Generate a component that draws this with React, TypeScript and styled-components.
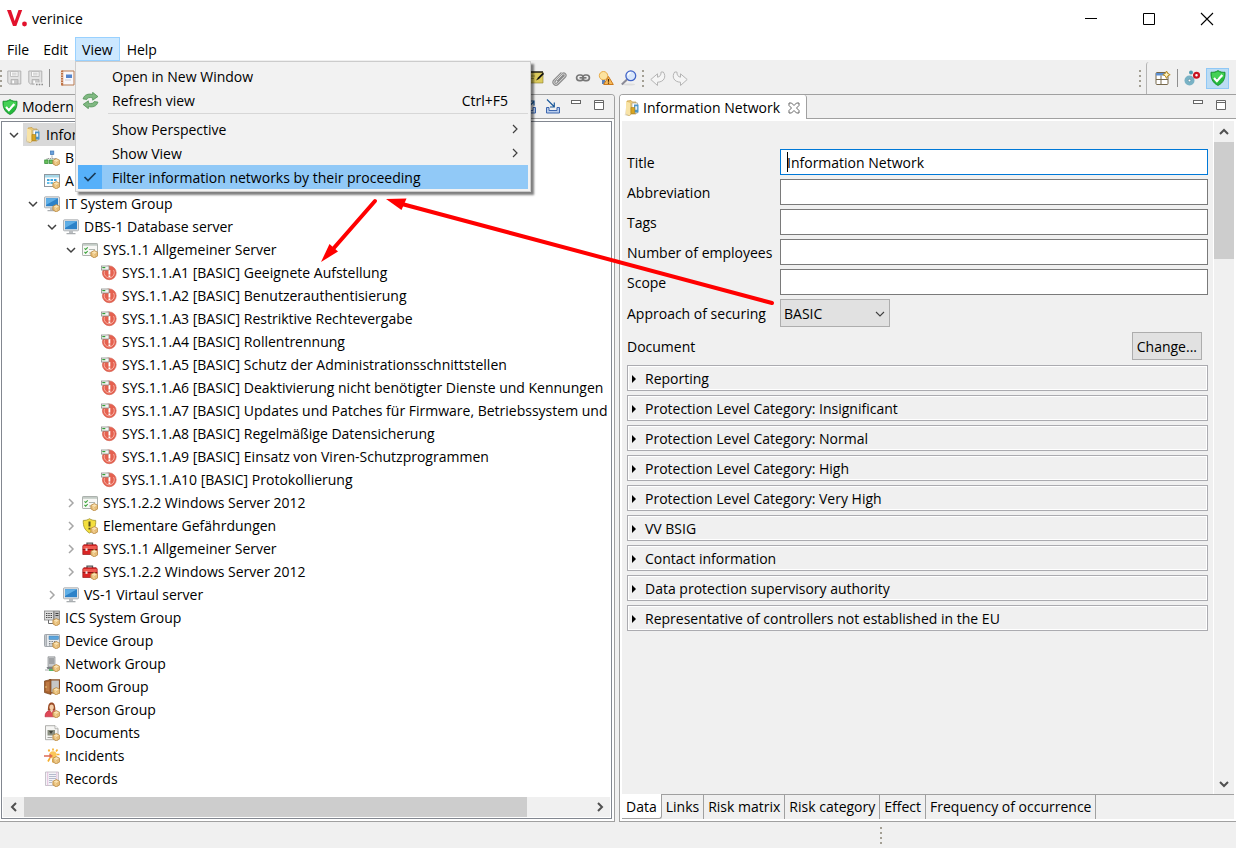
import React from 'react';
import styled, { createGlobalStyle } from 'styled-components';

const GlobalStyle = createGlobalStyle`
  *, *::before, *::after { box-sizing: border-box; }
  html, body { margin: 0; padding: 0; }
  body, button, input, select {
    font-family: "Open Sans", "Noto Sans", sans-serif;
    font-size: 14px;
    line-height: 20px;
    color: #000;
  }
  button { margin: 0; padding: 0; border: 0; background: none; }
  svg { display: block; flex: none; }
`;

/* ---------- window frame ---------- */

const Window = styled.div`
  position: relative;
  display: flex;
  flex-direction: column;
  min-height: 100vh;
  overflow: hidden;
  background: #f0f0f0;
`;

const TitleBar = styled.header`
  display: flex;
  align-items: center;
  height: 37px;
  padding-left: 7px;
  gap: 5px;
  background: #fff;
`;

const WindowButtons = styled.div`
  display: flex;
  margin-left: auto;
`;

const WindowButton = styled.button`
  display: flex;
  align-items: center;
  justify-content: center;
  width: 58px;
  height: 36px;
`;

const MenuBar = styled.nav`
  display: flex;
  height: 23px;
  background: #fff;
`;

const MenuSlot = styled.div`
  position: relative;
  z-index: 5;
`;

const MenuTitle = styled.button<{ $open?: boolean }>`
  height: 24px;
  padding: 2px 6px 0;
  border: 1px solid ${(p) => (p.$open ? '#99d1ff' : 'transparent')};
  background: ${(p) => (p.$open ? '#cce8ff' : 'transparent')};
`;

const Dropdown = styled.div`
  position: absolute;
  left: 0;
  top: 24px;
  width: 456px;
  padding: 2px;
  border: 1px solid #ccc;
  background: #f2f2f2;
  box-shadow: 3px 3px 2px rgba(0, 0, 0, 0.5);
`;

const MenuItem = styled.button<{ $active?: boolean }>`
  display: grid;
  grid-template-columns: 24px 1fr auto;
  column-gap: 10px;
  align-items: end;
  width: 100%;
  height: 24px;
  padding-right: 8px;
  line-height: 22px;
  text-align: left;
  background: ${(p) => (p.$active ? '#91c9f7' : 'transparent')};
  & > svg { align-self: center; }
`;

const MenuMark = styled.span<{ $active?: boolean }>`
  display: flex;
  align-items: center;
  justify-content: center;
  height: 24px;
  background: ${(p) => (p.$active ? '#56b0fa' : 'transparent')};
`;

const Shortcut = styled.span`
  padding-right: 12px;
`;

const MenuSeparator = styled.div`
  height: 5px;
  margin: 1px 0 -1px 30px;
  border-top: 1px solid #d7d7d7;
`;

/* ---------- toolbar ---------- */

const Toolbar = styled.div`
  display: flex;
  align-items: center;
  height: 34px;
  padding: 2px 7px 0 0;
`;

const ToolGroup = styled.div<{ $width?: number; $gap: number; $indent?: number }>`
  display: flex;
  align-items: center;
  gap: ${(p) => p.$gap}px;
  padding-left: ${(p) => p.$indent ?? 0}px;
  ${(p) => (p.$width ? `flex: 0 0 ${p.$width}px;` : '')}
`;

const ToolSpace = styled.div`
  flex: 1;
`;

const ToolButton = styled.button<{ $active?: boolean }>`
  display: flex;
  align-items: center;
  justify-content: center;
  width: ${(p) => (p.$active ? 23 : 16)}px;
  height: 21px;
  background: ${(p) => (p.$active ? '#bcdcf4' : 'transparent')};
  outline: ${(p) => (p.$active ? '1px solid #90c8f6' : 'none')};
  outline-offset: -1px;
`;

const ToolDivider = styled.span`
  width: 1px;
  height: 18px;
  background: #8f8f8f;
`;

const Grip = styled.span`
  display: flex;
  flex-direction: column;
  justify-content: space-between;
  width: 2px;
  height: 17px;
  & > i {
    width: 2px;
    height: 2px;
    background: #a39f94;
  }
`;

const PerspectiveBar = styled.div`
  display: flex;
  align-items: center;
  gap: 6px;
  height: 32px;
  margin-left: 5px;
  padding-left: 8px;
  border-left: 1px solid #b4b4b4;
  border-top-left-radius: 3px;
`;

/* ---------- views ---------- */

const Workbench = styled.main`
  display: flex;
  flex: 1;
  gap: 4px;
  min-height: 0;
`;

const View = styled.section<{ $grow: number; $side: 'left' | 'right' }>`
  display: flex;
  flex-direction: column;
  flex: ${(p) => p.$grow} 1 0;
  min-width: 0;
  border: 1px solid #a0a0a0;
  border-width: ${(p) => (p.$side === 'left' ? '1px 1px 1px 0' : '1px 0 1px 1px')};
  border-radius: ${(p) => (p.$side === 'left' ? '0 4px 0 0' : '4px 0 0 0')};
  background: #fff;
  overflow: hidden;
`;

const ViewHeader = styled.div`
  display: flex;
  height: 24px;
  background: #f0f0f0;
`;

const HeaderFill = styled.div`
  display: flex;
  flex: 1;
  align-items: center;
  gap: 4px;
  padding: 1px 9px 0 2px;
  border-bottom: 1px solid #a0a0a0;
`;

const HeaderTools = styled.div`
  display: flex;
  align-items: flex-start;
  gap: 8px;
  height: 17px;
  margin-left: auto;
`;

const EditorTab = styled.div`
  display: flex;
  align-items: center;
  gap: 3px;
  padding: 1px 6px 0 4px;
  border-right: 1px solid #a0a0a0;
  border-top-right-radius: 3px;
  background: #fff;
`;

const CloseTab = styled.button`
  margin-left: 5px;
`;

/* ---------- tree ---------- */

const TreeFrame = styled.div`
  display: flex;
  flex: 1;
  flex-direction: column;
  margin: 2px 2px 2px 1px;
  border: 1px solid #828790;
`;

const Tree = styled.ul`
  flex: 1;
  margin: 0;
  padding: 1px 0 0;
  list-style: none;
  overflow: hidden;
`;

const TreeRow = styled.li<{ $level: number }>`
  display: flex;
  height: 23px;
  padding-left: ${(p) => 2 + p.$level * 19}px;
  white-space: nowrap;
`;

const Twisty = styled.span`
  display: flex;
  align-items: center;
  justify-content: center;
  flex: 0 0 19px;
`;

const NodeLabel = styled.span<{ $selected?: boolean }>`
  display: flex;
  align-items: center;
  gap: 5px;
  padding: 0 4px 0 2px;
  background: ${(p) => (p.$selected ? '#d9d9d9' : 'transparent')};
`;

/* ---------- scroll bars ---------- */

const ScrollBar = styled.div<{ $vertical?: boolean }>`
  display: flex;
  flex-direction: ${(p) => (p.$vertical ? 'column' : 'row')};
  ${(p) => (p.$vertical ? 'flex: 0 0 21px; border-left: 1px solid #fff;' : 'height: 20px; margin: 0 1px 1px;')}
  background: #f0f0f0;
`;

const ScrollArrow = styled.button`
  display: flex;
  align-items: center;
  justify-content: center;
  flex: 0 0 21px;
`;

const ScrollThumb = styled.span<{ $share: number }>`
  flex: ${(p) => p.$share} 1 0;
  background: #cdcdcd;
`;

const ScrollRest = styled.span<{ $share: number }>`
  flex: ${(p) => p.$share} 1 0;
`;

/* ---------- form ---------- */

const EditorBody = styled.div`
  display: flex;
  flex: 1;
  margin: 2px 2px 0;
  background: #f0f0f0;
`;

const Form = styled.form`
  flex: 1;
  min-width: 0;
  padding: 28px 5px 0;
`;

const Field = styled.div`
  position: relative;
  display: grid;
  grid-template-columns: 153px 1fr;
  align-items: center;
  margin-bottom: 4px;
  white-space: nowrap;
  & > label { padding-top: 2px; }
`;

const TextBox = styled.input<{ $focused?: boolean }>`
  width: 100%;
  height: 26px;
  padding: 0 6px;
  border: 1px solid ${(p) => (p.$focused ? '#0078d7' : '#7a7a7a')};
  border-radius: 0;
  background: #fff;
  outline: none;
`;

const Caret = styled.span`
  position: absolute;
  left: 160px;
  top: 3px;
  width: 1px;
  height: 20px;
  background: #000;
`;

const ComboWrap = styled.div`
  position: relative;
  width: 110px;
  & > svg {
    position: absolute;
    right: 5px;
    top: 10px;
    pointer-events: none;
  }
`;

const Combo = styled.select`
  appearance: none;
  width: 100%;
  height: 28px;
  padding: 2px 3px 0;
  border: 1px solid #adadad;
  border-radius: 0;
  background: #e1e1e1;
`;

const DocumentRow = styled.div`
  display: flex;
  align-items: center;
  justify-content: space-between;
  margin: 5px 6px 5px 0;
  & > span { padding-top: 2px; }
`;

const PushButton = styled.button`
  height: 28px;
  padding: 2px 4px 0;
  border: 1px solid #adadad;
  background: #e1e1e1;
`;

const Sections = styled.div`
  display: flex;
  flex-direction: column;
  gap: 4px;
`;

const SectionButton = styled.button`
  display: flex;
  align-items: center;
  gap: 9px;
  width: 100%;
  height: 26px;
  padding: 2px 4px 0;
  border: 1px solid #ababb0;
  box-shadow: inset 0 0 0 1px #fff;
`;

const PageTabs = styled.div`
  display: flex;
  height: 25px;
  margin: 0 2px 2px;
  background: #f0f0f0;
  white-space: nowrap;
`;

const PageTab = styled.button<{ $active?: boolean }>`
  padding: ${(p) => (p.$active ? 2 : 0)}px 4px 0;
  border: solid #a0a0a0;
  border-width: ${(p) => (p.$active ? '0 1px 1px 0' : '1px 1px 0 0')};
  border-bottom-right-radius: ${(p) => (p.$active ? 3 : 0)}px;
  background: ${(p) => (p.$active ? '#fff' : '#f0f0f0')};
`;

const PageTabFill = styled.div`
  flex: 1;
  border-top: 1px solid #a0a0a0;
`;

const StatusBar = styled.footer`
  display: grid;
  grid-template-columns: 880fr 356fr;
  align-items: center;
  height: 26px;
`;

const StatusGrip = styled.div`
  grid-column: 2;
`;

const Arrows = styled.svg`
  position: absolute;
  left: 310px;
  top: 190px;
  z-index: 6;
  pointer-events: none;
`;

/* ---------- icons ---------- */

const Icon = ({ children, size = 16 }: { children: React.ReactNode; size?: number }) => (
  <svg width={size} height={size} viewBox="0 0 16 16" aria-hidden="true">
    {children}
  </svg>
);

const Cube = () => (
  <g>
    <path d="M12.3 8.6l3.4 1.7v3.6l-3.4 2-3.4-2v-3.6z" fill="#e6bd78" stroke="#b98a45" strokeWidth=".8" />
    <path d="M12.3 9.2l2.6 1.3-2.6 1.4-2.6-1.4z" fill="#fae3b4" />
    <path d="M10.4 11.8l1.6 1v2" stroke="#f7dca5" strokeWidth=".8" fill="none" />
  </g>
);

const Shield = () => (
  <Icon>
    <path d="M8 .5c2 1.500 4.500 2 7 1.700.4 6-1.500 10.600-7 13.300C2.500 12.800.6 8.200 1 2.200 3.500 2.500 6 2 8 .5z" fill="#25b93c" stroke="#168a2b" strokeWidth=".8" />
    <path d="M8 1.500c1.800 1.200 4 1.700 6.200 1.600 0 1.800-.2 3.200-.6 4.500-4 .2-7.600.6-11.200 1.400C1.900 7.200 1.700 5.300 1.800 3.100 4 3.200 6.200 2.700 8 1.500z" fill="#54dd62" opacity=".65" />
    <path d="M4 8l2.900 3.200L12.300 5" fill="none" stroke="#fff" strokeWidth="2.200" />
  </Icon>
);

const Folder = () => (
  <Icon>
    <path d="M3 1l4-.5 1.500 1.500H12v12H7l-1.500 1.800L2 14.500z" fill="#e9c874" stroke="#c49a45" strokeWidth=".7" />
    <path d="M2 1.300L6 3v12.400l-4-1.500z" fill="#f8e3a6" />
    <path d="M8 3h5.500v10H8z" fill="#fff" stroke="#a8a48f" strokeWidth=".7" />
    <path d="M10 4.500h4.500v8H10z" fill="#4c94c8" />
    <path d="M11.200 6.200h2v3.500h-2z" fill="#e8f3fa" />
    <path d="M7 7.500h3.700v6H7z" fill="#d9a520" stroke="#ad8117" strokeWidth=".6" />
    <path d="M0 15l3-1 2 1.800z" fill="#d8cfb4" />
  </Icon>
);

const Processes = () => (
  <Icon>
    <path d="M8 4v4M3 10V8.500h9V10" fill="none" stroke="#9a9a9a" strokeDasharray="1.500 .7" />
    <rect x="6.400" y="1" width="3.400" height="3.400" fill="#6aa0dc" stroke="#3f77b5" strokeWidth=".7" />
    <rect x=".7" y="10" width="3.400" height="3.400" fill="#69c05c" stroke="#36903a" strokeWidth=".8" />
    <rect x="5.500" y="10" width="3.400" height="3.400" fill="#69c05c" stroke="#36903a" strokeWidth=".8" />
    <Cube />
  </Icon>
);

const Applications = () => (
  <Icon>
    <rect x=".5" y="1.500" width="15" height="12" fill="#fdfdfd" stroke="#8e979e" />
    <path d="M1 2h14v2.500H1z" fill="#a6d7e8" />
    <path d="M3 6h2.500v2H3zM6.500 6H9v2H6.500zM10 6h2.500v2H10z" fill="#3ea5de" />
    <path d="M3 9h2.500v2H3zM6.500 9H9v2H6.500z" fill="#63bde8" />
    <Cube />
  </Icon>
);

const Monitor = ({ cube }: { cube?: boolean }) => (
  <Icon>
    <rect x=".5" y=".8" width="15" height="11" rx=".8" fill="#e2e4e6" stroke="#9ea3a7" strokeWidth=".8" />
    <rect x="2" y="2.200" width="12" height="8" fill="#2d82c8" />
    <path d="M2 2.200h12L2 9z" fill="#5eaee6" />
    <path d="M6 12h4v2H6z" fill="#b9bdc0" />
    <path d="M3.500 14h9v1.300h-9z" fill="#a9adb0" />
    {cube && <Cube />}
  </Icon>
);

const Checklist = () => (
  <Icon>
    <rect x=".5" y="1.500" width="15" height="12" rx=".6" fill="#f8f8f6" stroke="#a3a8a4" strokeWidth=".9" />
    <path d="M1 2h14v1.800H1z" fill="#c3ccc6" />
    <path d="M2.500 6.300l1.200 1.200 2-2.200M2.500 10l1.200 1.200 2-2.200" fill="none" stroke="#37a237" strokeWidth="1.100" />
    <path d="M7 7.500h6M7 11h2" stroke="#b0b6b0" />
    <Cube />
  </Icon>
);

const Requirement = () => (
  <Icon>
    <circle cx="8.300" cy="7.800" r="6.900" fill="#e5614f" stroke="#d2594a" strokeWidth=".6" />
    <path d="M12.500 5.200a5 5 0 1 1-9 1" fill="none" stroke="#f7b4a8" strokeWidth="1" />
    <rect x="7.500" y="5" width="1.800" height="4.600" fill="#fff" />
    <rect x="7.500" y="10.400" width="1.800" height="1.700" fill="#fff" />
    <rect x=".4" y="1" width="7.600" height="4" fill="#f4f4f2" stroke="#8c918c" strokeWidth=".8" />
    <path d="M1.300 2.600h3" stroke="#33a03a" strokeWidth="1.200" />
  </Icon>
);

const Threat = () => (
  <Icon>
    <path d="M7.500.7C9.300 2 11.300 2.500 13.700 2.400c.3 5.600-1.300 9.800-6.200 12.600C2.600 12.200 1 8 1.300 2.400 3.700 2.500 5.700 2 7.500.7z" fill="#f4df3e" stroke="#a89b33" strokeWidth=".9" />
    <path d="M6.500 3.500h2v5h-2zM6.500 9.700h2v1.800h-2z" fill="#57501d" />
    <Cube />
  </Icon>
);

const Toolbox = () => (
  <Icon>
    <path d="M5 5V2.200h5.500V5" fill="none" stroke="#555" strokeWidth="1.300" />
    <path d="M.8 5l1-1.300h12.400l1 1.300v8.500H.8z" fill="#d92525" stroke="#9a1717" strokeWidth=".7" />
    <path d="M1.300 5h13.400v3H1.300z" fill="#f05a50" />
    <path d="M.8 8.500h14.400" stroke="#7d1010" strokeWidth=".8" />
    <rect x="3.500" y="7.300" width="2" height="2.600" fill="#e9e9e9" />
    <Cube />
  </Icon>
);

const Ics = () => (
  <Icon>
    <rect x=".5" y="1" width="9" height="9" fill="#dedede" stroke="#858585" strokeWidth=".8" />
    <rect x="10" y="1" width="5.500" height="9" fill="#bfbfbf" stroke="#7c7c7c" strokeWidth=".8" />
    <path d="M2 3.500h6M2 5.500h6M2 7.500h6" stroke="#444" strokeDasharray="1.400 .9" />
    <path d="M11.500 3.500h3M11.500 5.500h3" stroke="#444" />
    <path d="M4.500 10v3.500H9" fill="none" stroke="#6c6c6c" />
    <Cube />
  </Icon>
);

const Device = () => (
  <Icon>
    <rect x=".5" y="1.500" width="15" height="12" rx=".8" fill="#e6e9ec" stroke="#8c9298" strokeWidth=".8" />
    <path d="M2.200 2v11" stroke="#a7acb1" strokeWidth="1.500" />
    <rect x="5" y="3" width="9.500" height="3.500" fill="#5ba4dc" stroke="#3d7cad" strokeWidth=".5" />
    <path d="M5 8.500h8M5 10.500h4M5 12h4" stroke="#7d8389" strokeDasharray="1.500 1" />
    <Cube />
  </Icon>
);

const Network = () => (
  <Icon>
    <path d="M4 .8h7v10H4z" fill="#c6c9cb" stroke="#8b8e90" strokeWidth=".7" />
    <path d="M5 3h5M5 5h5M5 7h5" stroke="#7a7d80" />
    <path d="M2.500 11h9.500l-1 2H3.500z" fill="#7a8084" />
    <path d="M1 14h4" stroke="#a5a8aa" strokeWidth="1" />
    <path d="M5 14h5" stroke="#2da445" strokeWidth="1.600" />
    <Cube />
  </Icon>
);

const Room = () => (
  <Icon>
    <path d="M5.500.8h10v13h-10z" fill="#c6c6c6" stroke="#8b4f24" strokeWidth="1.200" />
    <path d="M.5 2L7 .5v15L.5 13.500z" fill="#a7622f" stroke="#74401a" strokeWidth=".7" />
    <path d="M2 3.300l3.400-.6v9.900L2 12z" fill="#bd7a45" />
    <circle cx="2" cy="8" r=".8" fill="#f2d27d" />
    <Cube />
  </Icon>
);

const Person = () => (
  <Icon>
    <path d="M3.800 8.500C4 2.500 5 .5 7.600.5s3.600 2 3.800 8z" fill="#9a4b26" />
    <ellipse cx="7.600" cy="5.200" rx="2.100" ry="2.800" fill="#f5cfaa" />
    <path d="M1 14.800c0-4 2-5.800 4.800-6.200l1.800 2 1.800-2c2.800.4 4.600 2.200 4.600 6.200z" fill="#e04858" stroke="#b52e3d" strokeWidth=".6" />
    <path d="M6.300 8.200h2.600l-1.300 2.600z" fill="#f8dfc4" />
    <Cube />
  </Icon>
);

const DocumentIcon = () => (
  <Icon>
    <path d="M1.500.7h9.500l3 3v11h-12.500z" fill="#f5f5f3" stroke="#9c9c98" strokeWidth=".8" />
    <path d="M11 .7v3h3" fill="#fff" stroke="#9c9c98" strokeWidth=".7" />
    <path d="M3.500 5h7.500v5.500H3.500z" fill="#8a8f80" />
    <path d="M5 6h4l-2 3z" fill="#40423a" />
    <path d="M3.500 12.500h5" stroke="#a3a39f" />
    <Cube />
  </Icon>
);

const Incident = () => (
  <Icon>
    <path d="M9 2.500V.5M12 3.500l1.500-2M5.500 3.500L4.500 1.500M12.500 6.500h3M6 10l-2 3.500M9 11v3.500" stroke="#f6b02e" strokeWidth="1.700" />
    <circle cx="9" cy="6.800" r="3.600" fill="#fbc658" />
    <path d="M0 7.300h5.500V5.600L9 8l-3.500 2.400V8.800H0z" fill="#dd6a55" />
    <Cube />
  </Icon>
);

const RecordIcon = () => (
  <Icon>
    <path d="M1.500 1h13v13.500h-13z" fill="#f4f3f7" stroke="#b2aeb7" strokeWidth=".7" />
    <path d="M3.700 1v13.500M12.800 1v13.500" stroke="#e0b2d4" strokeWidth=".8" />
    <path d="M5 3.500h7M5 5.500h7M5 7.500h7M5 9.500h3.500M5 11.500h3" stroke="#adb3c6" strokeWidth=".9" />
    <Cube />
  </Icon>
);

const Save = ({ all }: { all?: boolean }) => (
  <Icon>
    <path d="M.8 1h13v13H2.500L.8 12.500z" fill="#e3e3e3" stroke="#b1b1b1" />
    <path d="M3.500 1.500h7.600v5H3.500z" fill="#fafafa" stroke="#b5b5b5" strokeWidth=".8" />
    <path d="M5 3.200h4.600M5 4.900h4.600" stroke="#bdbdbd" strokeWidth=".8" />
    <path d="M4 9.500h7V14H4z" fill="#c9c9c9" stroke="#aaa" strokeWidth=".7" />
    <path d="M5.300 10.500h1.700v2.700H5.300z" fill="#fff" />
    {all && <path d="M6.500 12.500H16V16H6.500z" fill="#f0f0f0" />}
    {all && <path d="M8 14.500h7" stroke="#8d8d8d" strokeWidth="1.600" strokeDasharray="1.600 1.100" />}
  </Icon>
);

const Notebook = () => (
  <Icon>
    <path d="M2 1h12v14H2z" fill="#f8f7fb" stroke="#b97b50" />
    <path d="M1 .5h2.200v15H1z" fill="#bf7246" />
    <path d="M0 2.500h3M0 5h3M0 7.500h3M0 10h3M0 12.500h3" stroke="#f0ddd0" strokeWidth=".8" />
    <path d="M6 4.500h6v3.500H6z" fill="#5384cc" />
    <path d="M5 10h6" stroke="#c4c4cc" strokeWidth=".8" />
  </Icon>
);

const Note = () => (
  <Icon>
    <path d="M0 2h14v11H0z" fill="#dccb5d" stroke="#8f8230" strokeWidth=".6" />
    <path d="M0 2h14" stroke="#111" strokeWidth="1.300" />
    <path d="M14 2.500l-5 5-2 3 3-1.500 5-5z" fill="#111" />
    <path d="M2 6h4M2 8.500h3" stroke="#8c7f2c" strokeWidth=".8" />
  </Icon>
);

const Clip = () => (
  <Icon>
    <path d="M4.500 10.500l6-6c1.600-1.500 3.600.5 2.100 2.100l-7 7c-2.200 2.100-5.100-.8-3-3l7.500-7.500" fill="none" stroke="#8d8d8d" strokeWidth="3" />
    <path d="M4.500 10.500l6-6c1.600-1.500 3.600.5 2.100 2.100l-7 7c-2.200 2.100-5.100-.8-3-3l7.500-7.500" fill="none" stroke="#dcdcdc" strokeWidth="1" />
  </Icon>
);

const Chain = () => (
  <Icon>
    <rect x="1.600" y="5" width="6.800" height="5.600" rx="2.800" fill="none" stroke="#777" strokeWidth="1.700" />
    <rect x="7.600" y="5" width="6.800" height="5.600" rx="2.800" fill="none" stroke="#777" strokeWidth="1.700" />
    <path d="M4.500 7.800h7" stroke="#777" strokeWidth="1.700" />
  </Icon>
);

const BulbWarning = () => (
  <Icon>
    <circle cx="5.500" cy="5.700" r="4.200" fill="#fce3a0" stroke="#e5a53b" strokeWidth=".9" />
    <path d="M4 10h3v4H4z" fill="#6084b8" />
    <path d="M10.500 6.500l4.800 8H5.700z" fill="#f6ba5a" stroke="#cc7a1d" strokeWidth="1" />
    <path d="M10.500 9v2.800M10.500 12.600v1.200" stroke="#4c2b08" strokeWidth="1.200" />
  </Icon>
);

const Search = () => (
  <Icon>
    <ellipse cx="8" cy="14.500" rx="6" ry="1" fill="#ddd" />
    <path d="M.8 14.500L6 9.500" stroke="#8a8a96" strokeWidth="2" />
    <circle cx="9.800" cy="5.800" r="4.900" fill="#d9e7fb" stroke="#4164c8" strokeWidth="1.300" />
    <path d="M6.900 5.500a3 3 0 0 1 3-2.800" fill="none" stroke="#fff" strokeWidth="1.200" />
  </Icon>
);

const Back = ({ forward }: { forward?: boolean }) => (
  <Icon>
    <path
      d="M.8 9.500L7.500 3.800v3.400c2.300-.4 3.700-2 3.600-5.200h2.200c3.200 4.500 1 10-5.800 10.200v3.300z"
      transform={forward ? 'translate(16 0) scale(-1 1)' : undefined}
      fill="#f5f5f5"
      stroke="#b4b4b4"
    />
  </Icon>
);

const OpenPerspective = () => (
  <Icon>
    <rect x="1" y="2.500" width="12" height="12" rx="1" fill="#fff" stroke="#77684b" />
    <path d="M1 3h12v2.500H1z" fill="#5a8ed2" />
    <path d="M1 9.500h12M6 5.500v9" stroke="#77684b" />
    <path d="M11.500 1l1.200 2.500 2.500 1.200-2.500 1.200-1.200 2.500-1.200-2.500-2.500-1.200 2.500-1.200z" fill="#fff3bf" stroke="#b98d24" strokeWidth="1" />
  </Icon>
);

const Risk = () => (
  <Icon>
    <circle cx="5.500" cy="10.500" r="5" fill="#79b2c5" />
    <circle cx="5.500" cy="10.500" r="1.300" fill="#fff" stroke="#4c8498" strokeWidth=".6" />
    <circle cx="7" cy="2.500" r="2" fill="#4c9bb1" />
    <circle cx="12.500" cy="5.200" r="2.400" fill="#fff" stroke="#c81420" strokeWidth="2.300" />
  </Icon>
);

const Transfer = ({ into }: { into?: boolean }) => (
  <Icon>
    <path d="M1.500 8.500v5.500h13V8.500h-2.500v3H4v-3z" fill="#b9cdec" stroke="#3c66ae" />
    {into ? (
      <path d="M2 .5l7 7M9.300 3.500V8H5" fill="none" stroke="#1d5a9b" strokeWidth="1.200" />
    ) : (
      <path d="M6 9.500l7-7M8.500 2H13v4.500" fill="none" stroke="#1d5a9b" strokeWidth="1.200" />
    )}
  </Icon>
);

const Refresh = () => (
  <Icon size={17}>
    <path d="M1 6.500C2 2.500 6 1.300 10 2.300V.3l5 4-5 3.400V5.500C7 4.800 5.300 5.200 4.500 7z" fill="#80b982" stroke="#4b8d51" strokeWidth=".7" />
    <path d="M15 9.500c-1 4-5 5.200-9 4.200v2l-5-4 5-3.400v2.200c3 .7 4.700.3 5.500-1.500z" fill="#80b982" stroke="#4b8d51" strokeWidth=".7" />
  </Icon>
);

const Minimize = () => (
  <svg width="16" height="12" viewBox="0 0 16 12" aria-hidden="true">
    <rect x="2.500" y="1.500" width="9" height="3" fill="#fff" stroke="#666" />
  </svg>
);

const Maximize = () => (
  <svg width="12" height="12" viewBox="0 0 12 12" aria-hidden="true">
    <path d="M1.500 1.500h9v9h-9zM1.500 3.500h9" fill="#fff" stroke="#666" />
  </svg>
);

type Direction = 'up' | 'down' | 'left' | 'right';
const angles: Record<Direction, number> = { down: 0, left: 90, up: 180, right: 270 };

const Chevron = ({ to, color = '#404040', weight = 1.5 }: { to: Direction; color?: string; weight?: number }) => (
  <svg width="10" height="10" viewBox="0 0 10 10" aria-hidden="true">
    <path d="M1 3l4 4 4-4" transform={`rotate(${angles[to]} 5 5)`} fill="none" stroke={color} strokeWidth={weight} />
  </svg>
);

/* ---------- data ---------- */

type Node = {
  level: number;
  icon: React.ReactNode;
  text: string;
  state?: 'open' | 'closed';
  selected?: boolean;
};

const requirements = [
  'A1 [BASIC] Geeignete Aufstellung',
  'A2 [BASIC] Benutzerauthentisierung',
  'A3 [BASIC] Restriktive Rechtevergabe',
  'A4 [BASIC] Rollentrennung',
  'A5 [BASIC] Schutz der Administrationsschnittstellen',
  'A6 [BASIC] Deaktivierung nicht benötigter Dienste und Kennungen',
  'A7 [BASIC] Updates und Patches für Firmware, Betriebssystem und',
  'A8 [BASIC] Regelmäßige Datensicherung',
  'A9 [BASIC] Einsatz von Viren-Schutzprogrammen',
  'A10 [BASIC] Protokollierung',
];

const nodes: Node[] = [
  { level: 0, icon: <Folder />, text: 'Infor', state: 'open', selected: true },
  { level: 1, icon: <Processes />, text: 'B' },
  { level: 1, icon: <Applications />, text: 'A' },
  { level: 1, icon: <Monitor cube />, text: 'IT System Group', state: 'open' },
  { level: 2, icon: <Monitor />, text: 'DBS-1 Database server', state: 'open' },
  { level: 3, icon: <Checklist />, text: 'SYS.1.1 Allgemeiner Server', state: 'open' },
  ...requirements.map((name) => ({ level: 4, icon: <Requirement />, text: `SYS.1.1.${name}` })),
  { level: 3, icon: <Checklist />, text: 'SYS.1.2.2 Windows Server 2012', state: 'closed' },
  { level: 3, icon: <Threat />, text: 'Elementare Gefährdungen', state: 'closed' },
  { level: 3, icon: <Toolbox />, text: 'SYS.1.1 Allgemeiner Server', state: 'closed' },
  { level: 3, icon: <Toolbox />, text: 'SYS.1.2.2 Windows Server 2012', state: 'closed' },
  { level: 2, icon: <Monitor />, text: 'VS-1 Virtaul server', state: 'closed' },
  { level: 1, icon: <Ics />, text: 'ICS System Group' },
  { level: 1, icon: <Device />, text: 'Device Group' },
  { level: 1, icon: <Network />, text: 'Network Group' },
  { level: 1, icon: <Room />, text: 'Room Group' },
  { level: 1, icon: <Person />, text: 'Person Group' },
  { level: 1, icon: <DocumentIcon />, text: 'Documents' },
  { level: 1, icon: <Incident />, text: 'Incidents' },
  { level: 1, icon: <RecordIcon />, text: 'Records' },
];

const fields = [
  { id: 'title', label: 'Title', value: 'Information Network' },
  { id: 'abbreviation', label: 'Abbreviation', value: '' },
  { id: 'tags', label: 'Tags', value: '' },
  { id: 'employees', label: 'Number of employees', value: '' },
  { id: 'scope', label: 'Scope', value: '' },
];

const sections = [
  'Reporting',
  'Protection Level Category: Insignificant',
  'Protection Level Category: Normal',
  'Protection Level Category: High',
  'Protection Level Category: Very High',
  'VV BSIG',
  'Contact information',
  'Data protection supervisory authority',
  'Representative of controllers not established in the EU',
];

const pages = ['Data', 'Links', 'Risk matrix', 'Risk category', 'Effect', 'Frequency of occurrence'];

const Dots = () => (
  <Grip aria-hidden="true">
    <i />
    <i />
    <i />
    <i />
  </Grip>
);

const ViewMenu = () => (
  <Dropdown role="menu">
    <MenuItem role="menuitem">
      <MenuMark />
      Open in New Window
    </MenuItem>
    <MenuItem role="menuitem">
      <MenuMark>
        <Refresh />
      </MenuMark>
      Refresh view
      <Shortcut>Ctrl+F5</Shortcut>
    </MenuItem>
    <MenuSeparator />
    <MenuItem role="menuitem">
      <MenuMark />
      Show Perspective
      <Chevron to="right" weight={1.2} />
    </MenuItem>
    <MenuItem role="menuitem">
      <MenuMark />
      Show View
      <Chevron to="right" weight={1.2} />
    </MenuItem>
    <MenuItem role="menuitemcheckbox" aria-checked="true" $active>
      <MenuMark $active>
        <svg width="14" height="12" viewBox="0 0 14 12" aria-hidden="true">
          <path d="M1.500 6l3.500 3.500L12.500 2" fill="none" stroke="#1b3a57" strokeWidth="1.700" />
        </svg>
      </MenuMark>
      Filter information networks by their proceeding
    </MenuItem>
  </Dropdown>
);

export default function App() {
  return (
    <Window>
      <GlobalStyle />
      <TitleBar>
        <svg width="20" height="20" viewBox="0 0 20 20" aria-hidden="true">
          <path d="M0 1h4l3.700 11L11.500 1h3.700L9.300 17H6z" fill="#e2122c" />
          <circle cx="17.500" cy="15" r="2.400" fill="#e2122c" />
        </svg>
        <span>verinice</span>
        <WindowButtons>
          <WindowButton aria-label="Minimize window">
            <svg width="14" height="14" viewBox="0 0 14 14">
              <path d="M1 6.500h12" stroke="#000" />
            </svg>
          </WindowButton>
          <WindowButton aria-label="Maximize window">
            <svg width="14" height="14" viewBox="0 0 14 14">
              <path d="M1.500 1.500h11v11h-11z" stroke="#000" fill="none" />
            </svg>
          </WindowButton>
          <WindowButton aria-label="Close window">
            <svg width="14" height="14" viewBox="0 0 14 14">
              <path d="M1 1l12 12M13 1L1 13" stroke="#000" strokeWidth="1.100" />
            </svg>
          </WindowButton>
        </WindowButtons>
      </TitleBar>

      <MenuBar>
        <MenuSlot>
          <MenuTitle>File</MenuTitle>
        </MenuSlot>
        <MenuSlot>
          <MenuTitle>Edit</MenuTitle>
        </MenuSlot>
        <MenuSlot>
          <MenuTitle $open aria-haspopup="menu" aria-expanded="true">
            View
          </MenuTitle>
          <ViewMenu />
        </MenuSlot>
        <MenuSlot>
          <MenuTitle>Help</MenuTitle>
        </MenuSlot>
      </MenuBar>

      <Toolbar>
        <ToolGroup $gap={5} $width={529}>
          <Dots />
          <ToolButton aria-label="Save">
            <Save />
          </ToolButton>
          <ToolButton aria-label="Save all">
            <Save all />
          </ToolButton>
          <ToolDivider />
          <ToolGroup $gap={5} $indent={5}>
            <ToolButton aria-label="Catalog">
              <Notebook />
            </ToolButton>
          </ToolGroup>
        </ToolGroup>
        <ToolGroup $gap={7}>
          <ToolButton aria-label="Note">
            <Note />
          </ToolButton>
          <ToolButton aria-label="Attachment">
            <Clip />
          </ToolButton>
          <ToolButton aria-label="Links">
            <Chain />
          </ToolButton>
          <ToolButton aria-label="Hints">
            <BulbWarning />
          </ToolButton>
          <ToolButton aria-label="Search">
            <Search />
          </ToolButton>
        </ToolGroup>
        <ToolGroup $gap={6} $indent={5}>
          <Dots />
          <ToolButton aria-label="Back">
            <Back />
          </ToolButton>
          <ToolButton aria-label="Forward">
            <Back forward />
          </ToolButton>
        </ToolGroup>
        <ToolSpace />
        <Dots />
        <PerspectiveBar>
          <ToolButton aria-label="Open perspective">
            <OpenPerspective />
          </ToolButton>
          <ToolDivider />
          <ToolButton aria-label="Risk perspective">
            <Risk />
          </ToolButton>
          <ToolButton $active aria-label="IT baseline perspective">
            <Shield />
          </ToolButton>
        </PerspectiveBar>
      </Toolbar>

      <Workbench>
        <View $grow={615} $side="left">
          <ViewHeader>
            <HeaderFill>
              <Shield />
              <span>Modern</span>
              <HeaderTools>
                <Transfer />
                <Transfer into />
                <Minimize />
                <Maximize />
              </HeaderTools>
            </HeaderFill>
          </ViewHeader>
          <TreeFrame>
            <Tree role="tree">
              {nodes.map((node, i) => (
                <TreeRow key={i} $level={node.level} role="treeitem" aria-level={node.level + 1}>
                  <Twisty>
                    {node.state === 'open' && <Chevron to="down" />}
                    {node.state === 'closed' && <Chevron to="right" color="#a6a6a6" />}
                  </Twisty>
                  <NodeLabel $selected={node.selected}>
                    {node.icon}
                    {node.text}
                  </NodeLabel>
                </TreeRow>
              ))}
            </Tree>
            <ScrollBar>
              <ScrollArrow aria-label="Scroll left">
                <Chevron to="left" color="#505050" weight={2} />
              </ScrollArrow>
              <ScrollThumb $share={503} />
              <ScrollRest $share={62} />
              <ScrollArrow aria-label="Scroll right">
                <Chevron to="right" color="#505050" weight={2} />
              </ScrollArrow>
            </ScrollBar>
          </TreeFrame>
        </View>

        <View $grow={617} $side="right">
          <ViewHeader>
            <EditorTab>
              <Folder />
              <span>Information Network</span>
              <CloseTab aria-label="Close tab">
                <svg width="12" height="12" viewBox="0 0 12 12">
                  <path d="M1 1h2.500L6 3.500 8.500 1H11v2.500L8.500 6 11 8.500V11H8.500L6 8.500 3.500 11H1V8.500L3.500 6 1 3.500z" fill="#fff" stroke="#666" />
                </svg>
              </CloseTab>
            </EditorTab>
            <HeaderFill>
              <HeaderTools>
                <Minimize />
                <Maximize />
              </HeaderTools>
            </HeaderFill>
          </ViewHeader>
          <EditorBody>
            <Form onSubmit={(e) => e.preventDefault()}>
              {fields.map((field, i) => (
                <Field key={field.id}>
                  <label htmlFor={field.id}>{field.label}</label>
                  <TextBox id={field.id} type="text" defaultValue={field.value} $focused={i === 0} />
                  {i === 0 && <Caret />}
                </Field>
              ))}
              <Field>
                <label htmlFor="approach">Approach of securing</label>
                <ComboWrap>
                  <Combo id="approach" defaultValue="BASIC">
                    <option>BASIC</option>
                  </Combo>
                  <Chevron to="down" weight={1.1} />
                </ComboWrap>
              </Field>
              <DocumentRow>
                <span>Document</span>
                <PushButton type="button">Change...</PushButton>
              </DocumentRow>
              <Sections>
                {sections.map((name) => (
                  <SectionButton key={name} type="button" aria-expanded="false">
                    <svg width="4" height="8" viewBox="0 0 4 8" aria-hidden="true">
                      <path d="M0 0l4 4-4 4z" />
                    </svg>
                    {name}
                  </SectionButton>
                ))}
              </Sections>
            </Form>
            <ScrollBar $vertical>
              <ScrollArrow aria-label="Scroll up">
                <Chevron to="up" color="#505050" weight={2} />
              </ScrollArrow>
              <ScrollThumb $share={117} />
              <ScrollRest $share={514} />
              <ScrollArrow aria-label="Scroll down">
                <Chevron to="down" color="#505050" weight={2} />
              </ScrollArrow>
            </ScrollBar>
          </EditorBody>
          <PageTabs role="tablist">
            {pages.map((page, i) => (
              <PageTab key={page} role="tab" aria-selected={i === 0} $active={i === 0}>
                {page}
              </PageTab>
            ))}
            <PageTabFill />
          </PageTabs>
        </View>
      </Workbench>

      <StatusBar>
        <StatusGrip>
          <Dots />
        </StatusGrip>
      </StatusBar>

      <Arrows width="480" height="130" viewBox="310 190 480 130" aria-hidden="true">
        <g stroke="#f00" strokeWidth="4" strokeLinecap="round">
          <path d="M375 201L333 249" />
          <path d="M772 303L402 204" />
        </g>
        <path d="M321 262l8.500-18 8.500 7.500z" fill="#f00" />
        <path d="M386 199l20.500-.5-5 11.500z" fill="#f00" />
      </Arrows>
    </Window>
  );
}
